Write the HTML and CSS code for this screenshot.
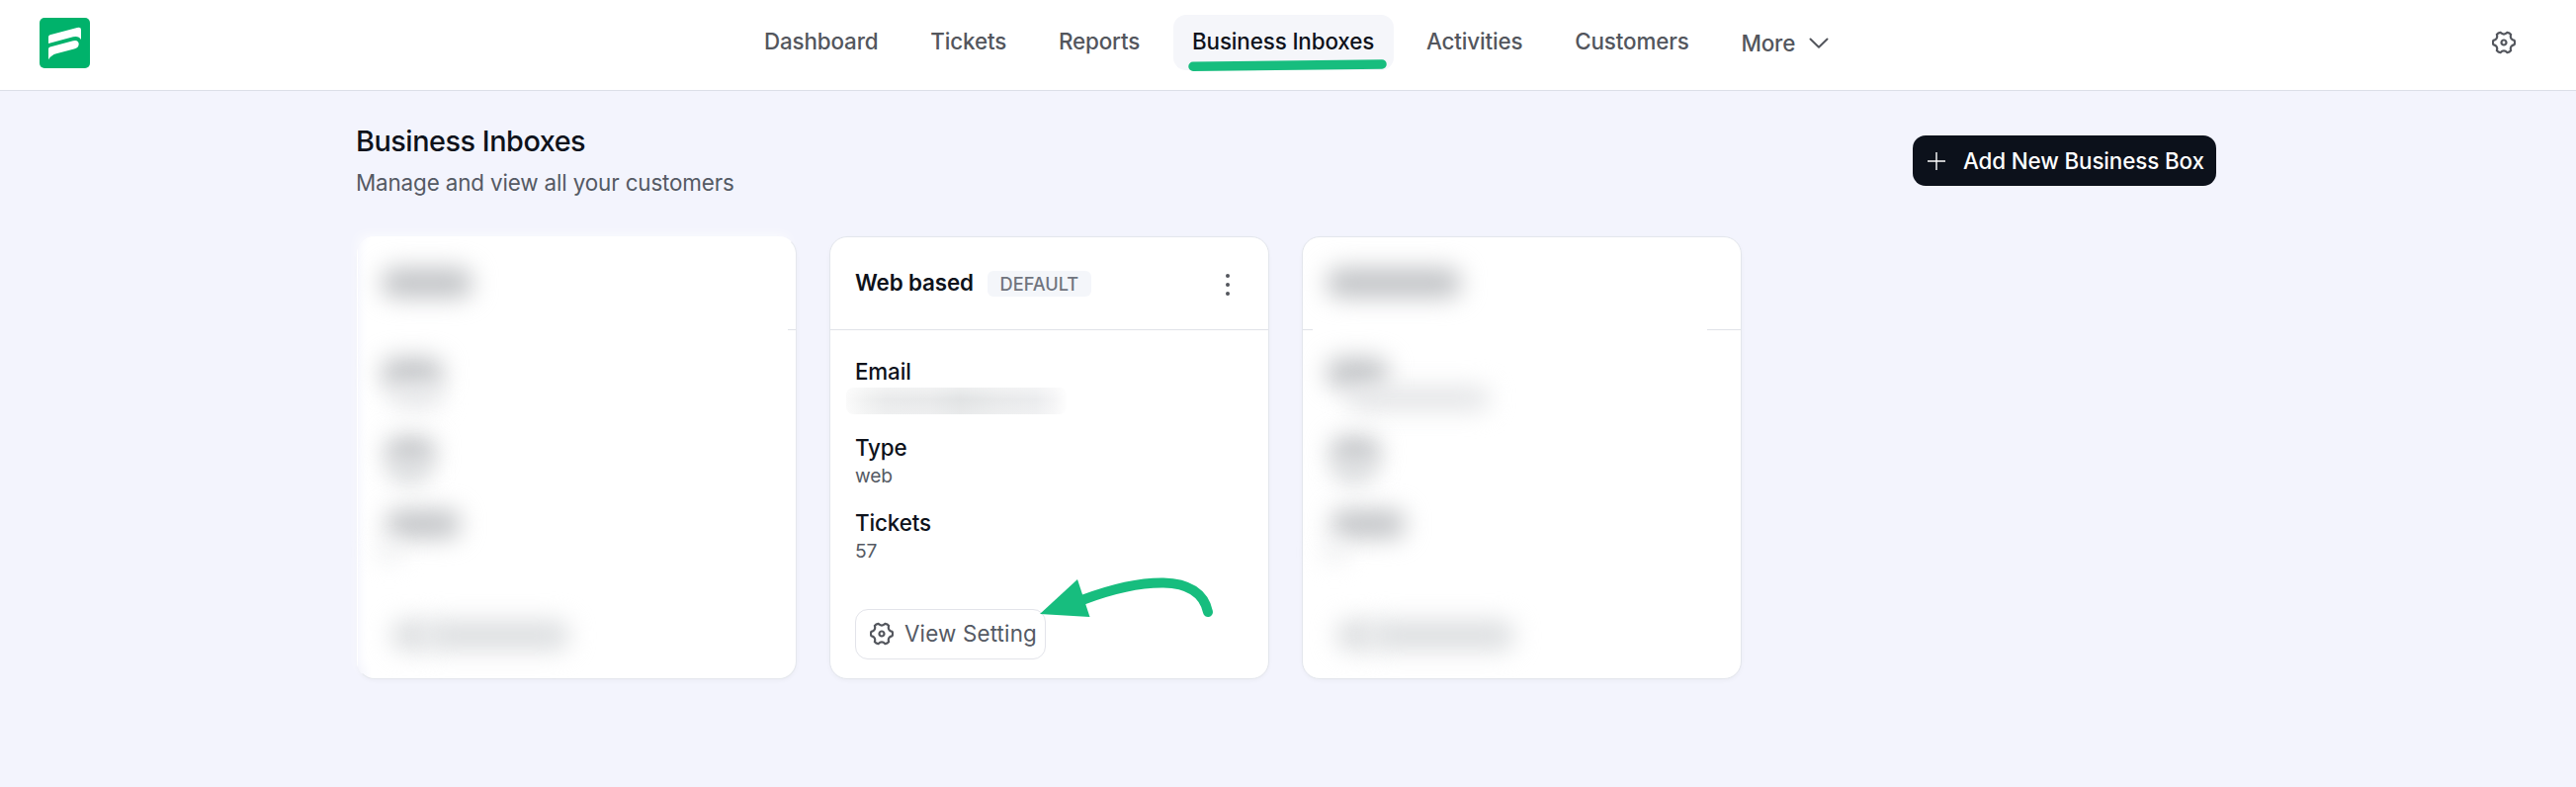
FILE: index.html
```html
<!DOCTYPE html>
<html lang="en">
<head>
<meta charset="utf-8">
<title>Business Inboxes</title>
<link rel="stylesheet" href="styles.css">
</head>
<body>
<svg class="defs" width="0" height="0" aria-hidden="true">
  <symbol id="gear" viewBox="-12 -12 24 24">
    <path d="M10.6-2.06Q11.6 0 10.6 2.06Q5.72 3.3 7.09 8.15Q5.8 10.05 3.52 10.21Q0 6.6-3.52 10.21Q-5.8 10.05-7.09 8.15Q-5.72 3.3-10.6 2.06Q-11.6 0-10.6-2.06Q-5.72-3.3-7.09-8.15Q-5.8-10.05-3.52-10.21Q0-6.6 3.52-10.21Q5.8-10.05 7.09-8.15Q5.72-3.3 10.6-2.06Z"/>
    <circle r="2.5"/>
  </symbol>
</svg>
<header class="topbar">
  <svg class="logo" viewBox="0 0 51 51">
    <rect width="51" height="51" rx="5" fill="#00b26b"/>
    <path d="M9 19.5Q9 17.8 10.6 17.3L38 10Q42 9 42 12V22Q39.500 17.800 34 19.300L9 26Z" fill="#fff"/>
    <path d="M9 31.500Q9 29.900 10.600 29.400L34 23.200Q39.500 22 39.700 26.500Q39.700 30.300 35 31.600L17 36.300Q12 37.600 9 42.200Z" fill="#fff"/>
  </svg>
  <nav class="nav">
    <a class="nav-item">Dashboard</a>
    <a class="nav-item">Tickets</a>
    <a class="nav-item">Reports</a>
    <a class="nav-item active">Business Inboxes
      <svg class="underline" viewBox="0 0 204 14"><path d="M6 7.200L197 5" /></svg>
    </a>
    <a class="nav-item">Activities</a>
    <a class="nav-item">Customers</a>
    <a class="nav-item more">More
      <svg class="chevron" viewBox="0 0 20 12"><path d="M1.500 1.500L10 9.800L18.500 1.500"/></svg>
    </a>
  </nav>
  <svg class="gear"><use href="#gear"/></svg>
</header>
<main class="page">
  <div class="page-head">
    <div>
      <h1 class="title">Business Inboxes</h1>
      <p class="subtitle">Manage and view all your customers</p>
    </div>
    <button class="add">
      <svg class="plus" viewBox="0 0 18 18"><path d="M9 0V18M0 9H18"/></svg>
      <span>Add New Business Box</span>
    </button>
  </div>
  <div class="cards">
    <section class="card hidden-card faded">
      <div class="stub stub-right"></div>
      <i class="smudge name-a"></i>
      <i class="smudge email"></i>
      <i class="smudge email-val"></i>
      <i class="smudge type"></i>
      <i class="smudge type-val"></i>
      <i class="smudge tickets"></i>
      <i class="smudge count"></i>
      <i class="smudge btn-icon"></i>
      <i class="smudge btn-text"></i>
    </section>
    <section class="card">
      <div class="card-head">
        <h2 class="card-name">Web based</h2>
        <span class="badge">DEFAULT</span>
        <svg class="dots" viewBox="0 0 6 24"><circle cx="3" cy="3" r="2"/><circle cx="3" cy="12" r="2"/><circle cx="3" cy="21" r="2"/></svg>
      </div>
      <div class="card-body">
        <dl class="fields">
          <div class="field"><dt>Email</dt><dd class="redacted"><i class="redacted-glow"></i></dd></div>
          <div class="field"><dt>Type</dt><dd>web</dd></div>
          <div class="field"><dt>Tickets</dt><dd>57</dd></div>
        </dl>
        <button class="view"><svg class="gear"><use href="#gear"/></svg><span>View Setting</span></button>
      </div>
      <svg class="arrow" viewBox="0 0 180 46">
        <path class="arrow-line" d="M44 22.500C92 4.500 118 5.500 125 5.500C150 6 166 16 170 35"/>
        <path class="arrow-tip" d="M0 37L38 2L50.500 40Z"/>
      </svg>
    </section>
    <section class="card hidden-card">
      <div class="stub stub-left"></div>
      <div class="stub stub-wide"></div>
      <i class="smudge name-b"></i>
      <i class="smudge email"></i>
      <i class="smudge email-long"></i>
      <i class="smudge type"></i>
      <i class="smudge type-val"></i>
      <i class="smudge tickets"></i>
      <i class="smudge count"></i>
      <i class="smudge btn-icon"></i>
      <i class="smudge btn-text"></i>
    </section>
  </div>
</main>
</body>
</html>
```
FILE: styles.css
```css
* { box-sizing: border-box; }
body {
  margin: 0;
  min-height: 796px;
  background: #f3f4fd;
  font-family: Inter, "Liberation Sans", sans-serif;
  font-size: 22.4px;
  line-height: 32px;
  letter-spacing: -0.006em;
  color: #0e121b;
}
h1, h2, p, dl, dd { margin: 0; }
button { font: inherit; letter-spacing: inherit; }
.defs { position: absolute; }

.topbar {
  display: flex;
  align-items: center;
  height: 92px;
  padding: 0 61px 5px 40px;
  background: #fff;
  border-bottom: 1px solid #dcdfe8;
}
.logo { width: 51px; height: 51px; flex: none; }
.nav { display: flex; gap: 14px; margin: 0 auto 0 662.500px; }
.nav-item {
  position: relative;
  display: flex;
  align-items: center;
  height: 56px;
  padding: 0 19.4px 2px;
  border-radius: 13px;
  font-weight: 500;
  color: #53565d;
  white-space: nowrap;
}
.nav-item.active { background: #f5f6fa; color: #0e121b; }
.underline { position: absolute; left: 14px; top: 45px; width: 204px; height: 14px; }
.underline path { stroke: #17bd7e; stroke-width: 9.5; stroke-linecap: round; }
.more { padding-top: 2px; padding-bottom: 0; gap: 14px; }
.chevron { width: 20px; height: 12px; fill: none; stroke: #53565d; stroke-width: 2; stroke-linecap: round; stroke-linejoin: round; }
.gear { width: 24px; height: 24px; fill: none; stroke: #53565d; stroke-width: 2.2; flex: none; }

.page { width: 1881px; margin-left: 361px; padding-top: 32px; }
.page-head { display: flex; justify-content: space-between; align-items: flex-start; height: 115px; }
.title { margin-left: -1px; font-size: 28.8px; line-height: 38px; font-weight: 500; letter-spacing: -0.016em; }
.subtitle { margin: 6px 0 0 -1px; color: #555a64; line-height: 34px; }
.add {
  display: flex;
  align-items: center;
  gap: 18px;
  width: 307px;
  height: 51px;
  margin-top: 13px;
  padding: 0 0 0 15px;
  border: 0;
  border-radius: 13px;
  background: #0c111b;
  color: #fff;
  font-weight: 500;
  white-space: nowrap;
}
.plus { width: 18px; height: 18px; stroke: #fff; stroke-width: 1.400; }

.cards { display: grid; grid-template-columns: repeat(4, 445px); gap: 33px; }
.card {
  position: relative;
  height: 448px;
  background: #fff;
  border: 1px solid #e3e6ec;
  border-radius: 18px;
  box-shadow: 0 2px 4px rgba(14, 18, 27, .03);
}
.card-head {
  display: flex;
  align-items: center;
  height: 94px;
  padding: 0 38px 1px 25px;
  border-bottom: 1px solid #e0e3e8;
}
.card-name { font-size: 22.4px; line-height: 32px; font-weight: 600; white-space: nowrap; }
.badge {
  width: 105px;
  height: 26px;
  margin-left: 14px;
  margin-top: 1px;
  border-radius: 6px;
  background: #f4f6fa;
  color: #70747e;
  font-size: 18.200px;
  font-weight: 500;
  line-height: 26px;
  letter-spacing: 0;
  text-align: center;
}
.dots { width: 6px; height: 24px; margin-left: auto; position: relative; top: 2px; fill: #53565d; }
.card-body { padding: 26px 25px; }
.fields { display: grid; gap: 16.500px; }
.field { height: 60px; }
dt { font-weight: 500; line-height: 32px; }
dd { font-size: 19.200px; line-height: 24px; color: #555a64; }
.redacted {
  width: 223px;
  height: 27px;
  margin-left: -9px;
  overflow: hidden;
  border-radius: 8px;
}
.redacted-glow {
  display: block;
  height: 27px;
  background:
    linear-gradient(180deg, rgba(255, 255, 255, .4), rgba(255, 255, 255, 0) 45%, rgba(255, 255, 255, .25)),
    linear-gradient(90deg, #fafafa, #f0f1f1 9%, #e9eaeb 18%, #e8e9ea 38%, #e1e3e4 52%, #e8e9ea 68%, #ebecee 86%, #f4f4f5 94%, #fefefe);
}
.view {
  display: flex;
  align-items: center;
  gap: 11px;
  width: 193px;
  height: 51px;
  margin: 43px 0 0 0;
  padding: 0 0 1px 14px;
  border: 1px solid #e3e4ea;
  border-radius: 13px;
  background: #fff;
  color: #555a64;
  letter-spacing: 0.007em;
  white-space: nowrap;
}
.arrow { position: absolute; left: 212px; top: 344px; width: 180px; height: 46px; overflow: visible; }
.arrow-line { fill: none; stroke: #17bd7e; stroke-width: 10; stroke-linecap: round; }
.arrow-tip { fill: #17bd7e; }

/* Concealed inboxes: soft shapes in place of the private content */
.faded { background: linear-gradient(90deg, rgba(255, 255, 255, 0), #fff 14px); border-color: transparent #e3e6ec #e3e6ec transparent; }
.faded::before {
  content: "";
  position: absolute;
  left: 2px;
  top: 0;
  width: 432px;
  height: 436px;
  background: #fff;
  filter: blur(7px);
}
.stub { position: absolute; top: 93px; height: 1px; background: #e0e3e8; }
.stub-right { right: 0; width: 8px; }
.stub-left { left: 0; width: 10px; }
.stub-wide { right: 0; width: 34px; }
.smudge { position: absolute; border-radius: 14px; filter: blur(12px); background: #c1c3c6; }
.name-a { left: 24px; top: 31px; width: 92px; height: 30px; }
.name-b { left: 24px; top: 31px; width: 136px; height: 30px; }
.email { left: 24px; top: 122px; width: 62px; height: 30px; }
.email-val { left: 33px; top: 150px; width: 52px; height: 22px; background: #e6e7e9; }
.email-long { left: 45px; top: 151px; width: 144px; height: 24px; background: #e3e4e6; }
.type { left: 28px; top: 202px; width: 50px; height: 29px; }
.type-val { left: 32px; top: 224px; width: 40px; height: 24px; background: #d9dbdd; }
.tickets { left: 28px; top: 276px; width: 76px; height: 28px; }
.count { left: 20px; top: 310px; width: 24px; height: 18px; background: #ecedee; }
.btn-icon { left: 34px; top: 387px; width: 40px; height: 31px; background: #dcdee0; }
.btn-text { left: 68px; top: 387px; width: 146px; height: 31px; background: #dddfe1; }
```
